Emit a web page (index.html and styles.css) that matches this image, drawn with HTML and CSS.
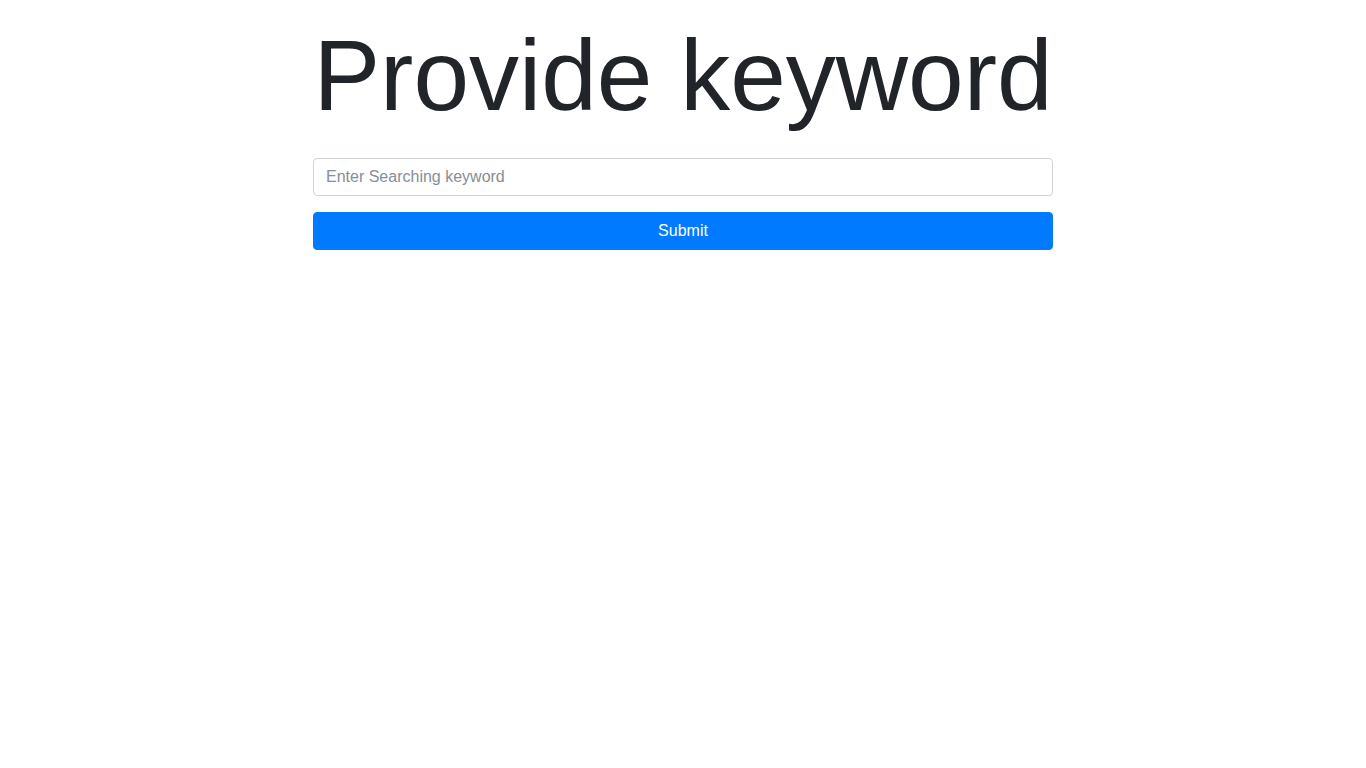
FILE: index.html
```html
<!DOCTYPE html>
<html lang="en">
<head>
<meta charset="utf-8">
<title>Provide keyword</title>
<link rel="stylesheet" href="styles.css">
</head>
<body>
<main class="container">
  <h1 class="title">Provide keyword</h1>
  <form class="search-form">
    <div class="form-group">
      <input class="form-control" type="text" placeholder="Enter Searching keyword">
    </div>
    <button class="btn-submit" type="submit">Submit</button>
  </form>
</main>
</body>
</html>
```

FILE: styles.css
```css
* { box-sizing: border-box; }
html, body {
  margin: 0;
  padding: 0;
  background: #fff;
  color: #212529;
  font-family: "Liberation Sans", Arial, sans-serif;
  font-size: 16px;
  line-height: 1.5;
}
.container {
  width: 740px;
  margin: 0 auto;
  padding-top: 15px;
}
.title {
  margin: 0 0 23px;
  font-size: 100px;
  font-weight: 300;
  line-height: 1.2;
  text-align: center;
  color: #212529;
}
.form-group {
  margin-bottom: 16px;
}
.form-control {
  display: block;
  width: 100%;
  height: 38px;
  padding: 6px 12px;
  font-family: inherit;
  font-size: 16px;
  line-height: 1.5;
  color: #495057;
  background: #fff;
  border: 1px solid #ced4da;
  border-radius: 4px;
  outline: none;
}
.form-control::placeholder {
  color: #868e96;
  opacity: 1;
}
.btn-submit {
  display: block;
  width: 100%;
  height: 38px;
  padding: 6px 12px;
  font-family: inherit;
  font-size: 16px;
  line-height: 1.5;
  color: #fff;
  background: #007bff;
  border: 1px solid #007bff;
  border-radius: 4px;
  cursor: pointer;
}
```
